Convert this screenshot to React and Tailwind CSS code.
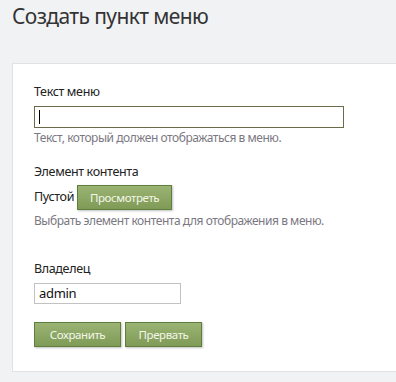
import React from 'react';

const font = { fontFamily: '"Noto Sans", "Open Sans", sans-serif' };

function GreenButton({ children, className = '' }) {
  return (
    <button
      className={`h-[25px] border border-[#5f7d3d] bg-gradient-to-b from-[#9bb373] to-[#7f9b57] text-[11.5px] tracking-[-0.4px] text-[#f4f6ea] shadow-[1px_1px_2px_rgba(0,0,0,0.25)] ${className}`}
    >
      {children}
    </button>
  );
}

const label = 'text-[12.5px] leading-[18px] tracking-[-0.35px] text-[#222]';
const help = 'text-[12px] leading-[16px] tracking-[-0.45px] text-[#7b7882]';

export default function App() {
  return (
    <div className="w-[396px] h-[382px] overflow-hidden bg-[#f1f2f4]" style={font}>
      <h1 className="pl-[12px] pt-[2px] text-[21px] leading-[28px] tracking-[-0.6px] text-[#333]">Создать пункт меню</h1>

      <div className="mt-[33px] ml-[12px] w-[400px] bg-white border border-[#e1e2e4] pt-[19px] pb-[24px] pl-[21px]">
        {/* Текст меню */}
        <div className={label}>Текст меню</div>
        <div className="mt-[5px] w-[310px] h-[22px] border border-[#6b6b4c] flex items-center pl-[4px]">
          <span className="block w-[1px] h-[14px] bg-black"></span>
        </div>
        <div className={`mt-[2px] ${help}`}>
          Текст, который должен отображаться в меню.
        </div>

        {/* Элемент контента */}
        <div className={`mt-[17px] ${label}`}>Элемент контента</div>
        <div className="mt-[4px] flex items-center gap-[3px]">
          <span className="text-[12.5px] tracking-[-0.35px] text-[#222]">Пустой</span>
          <GreenButton className="w-[95px]">Просмотреть</GreenButton>
        </div>
        <div className={`mt-[3px] ${help}`}>
          Выбрать элемент контента для отображения в меню.
        </div>

        {/* Владелец */}
        <div className={`mt-[31px] ${label}`}>Владелец</div>
        <div className="mt-[5px] w-[147px] h-[21px] border border-[#c2c2c2] flex items-center pl-[4px] text-[13px] tracking-[-0.3px] text-[#111]">
          admin
        </div>

        <div className="mt-[18px] flex gap-[4px]">
          <GreenButton className="w-[87px]">Сохранить</GreenButton>
          <GreenButton className="w-[77px]">Прервать</GreenButton>
        </div>
      </div>
    </div>
  );
}
